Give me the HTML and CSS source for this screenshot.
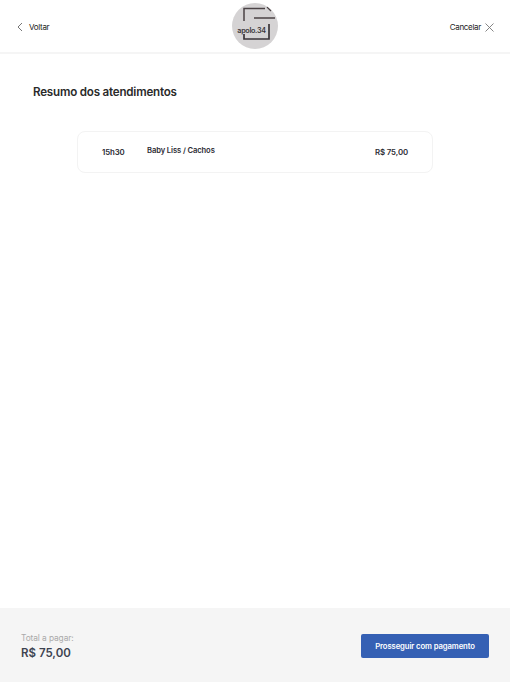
FILE: index.html
```html
<!DOCTYPE html>
<html lang="pt-BR">
<head>
<meta charset="utf-8">
<title>Resumo dos atendimentos</title>
<link rel="stylesheet" href="styles.css">
</head>
<body>
<div class="page">
  <header class="topbar">
    <a class="nav nav-left">
      <svg class="icon-chevron" viewBox="0 0 6 10" width="6" height="10"><path d="M5 1 L1 5 L5 9" fill="none" stroke="#666" stroke-width=".9"/></svg>
      <span>Voltar</span>
    </a>
    <div class="logo">
      <svg class="logo-frame" viewBox="0 0 46 46" width="46" height="46">
        <path d="M12 18 V5.500 H33" fill="none" stroke="#4a4245" stroke-width="1.500"/>
        <path d="M22 15 H43" fill="none" stroke="#4a4245" stroke-width="1.300"/>
        <path d="M37 21 V36 H12 V31" fill="none" stroke="#3a3538" stroke-width="1.700"/>
        <path d="M35 4 L39 8" fill="none" stroke="#4a4245" stroke-width="1.200"/>
      </svg>
      <span class="logo-text">apolo.34</span>
    </div>
    <a class="nav nav-right">
      <span>Cancelar</span>
      <svg viewBox="0 0 9 9" width="9" height="9"><path d="M.5 .5 L8.500 8.500 M8.500 .5 L.5 8.500" fill="none" stroke="#777" stroke-width=".9"/></svg>
    </a>
  </header>

  <main class="content">
    <h1 class="title">Resumo dos atendimentos</h1>
    <section class="card">
      <span class="time">15h30</span>
      <span class="service">Baby Liss / Cachos</span>
      <span class="price">R$ 75,00</span>
    </section>
  </main>

  <footer class="footer">
    <div class="total">
      <span class="total-label">Total a pagar:</span>
      <span class="total-value">R$ 75,00</span>
    </div>
    <button class="pay">Prosseguir com pagamento</button>
  </footer>
</div>
</body>
</html>
```
FILE: styles.css
```css
* { box-sizing: border-box; }
html, body { margin: 0; height: 100%; }
body { font-family: Inter, "Liberation Sans", sans-serif; background: #fff; color: #222; }
.page { height: 682px; display: flex; flex-direction: column; }
.topbar {
  height: 54px;
  padding: 2px 16px 0;
  display: grid;
  grid-template-columns: 1fr auto 1fr;
  align-items: center;
  border-bottom: 2px solid #f5f5f5;
}
.nav { display: flex; align-items: center; font-size: 8px; letter-spacing: -.3px; color: #222; }
.nav-left { gap: 6px; }
.icon-chevron { margin-left: 1px; }
.nav-right { gap: 4px; justify-content: flex-end; }
.logo {
  position: relative;
  width: 46px;
  height: 46px;
  border-radius: 50%;
  background: #d5d3d4;
  display: flex;
  align-items: center;
  justify-content: center;
  overflow: hidden;
  transform: translateY(-1px);
}
.logo-frame { position: absolute; inset: 0; }
.logo-text { position: relative; font-size: 7.200px; font-weight: 600; letter-spacing: -.3px; color: #3a3538; margin: 8px 7px 0 0; }
.content { flex: 1; padding: 30px 77px 0; }
.title { margin: 0 0 31px -44px; font-size: 11.600px; line-height: 16px; font-weight: 600; letter-spacing: -.2px; color: #2a2a2a; }
.card {
  height: 42px;
  border: 1px solid #f3f3f3;
  border-radius: 8px;
  display: grid;
  grid-template-columns: 45px 1fr auto;
  align-items: center;
  padding: 0 24px;
  font-size: 7.800px;
  font-weight: 600;
  letter-spacing: -.1px;
  color: #2b2b33;
}
.service { font-size: 7.600px; margin-top: -3px; }
.footer {
  height: 74px;
  background: #f5f5f5;
  padding: 2px 21px 0;
  display: flex;
  align-items: center;
  justify-content: space-between;
}
.total { display: flex; flex-direction: column; gap: 1px; }
.total-label { padding-top: 1px; font-size: 8.400px; line-height: 11px; color: #aaa; letter-spacing: -.1px; }
.total-value { font-size: 11.500px; line-height: 16px; font-weight: 600; color: #3d4350; }
.pay {
  width: 128px;
  height: 24px;
  border: 0;
  border-radius: 2px;
  background: #3560b4;
  color: #fff;
  font: 600 7.700px Inter, "Liberation Sans", sans-serif;
  letter-spacing: -.1px;
  padding: 0;
}
```
